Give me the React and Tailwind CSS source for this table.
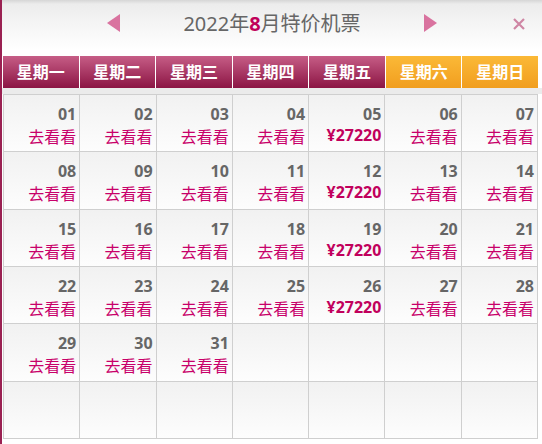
import React from "react";

const weekdays = ["星期一", "星期二", "星期三", "星期四", "星期五", "星期六", "星期日"];

function Triangle({ dir }) {
  return (
    <svg width="13" height="18" viewBox="0 0 13 18" className="block shrink-0">
      {dir === "left" ? (
        <polygon points="13,0 13,18 0,9" fill="#d9739f" />
      ) : (
        <polygon points="0,0 0,18 13,9" fill="#d9739f" />
      )}
    </svg>
  );
}

function DayCell({ day }) {
  if (!day) {
    return <div className="bg-[linear-gradient(to_bottom,#f1f1f1,#fdfdfd)]" />;
  }
  const isFriday = day % 7 === 5;
  const num = day < 10 ? "0" + day : "" + day;
  return (
    <div className="bg-[linear-gradient(to_bottom,#f1f1f1,#fdfdfd)] pt-[9px] pr-[3px] text-right">
      <p className="text-[16px] leading-[20px] font-bold text-[#666]">{num}</p>
      {isFriday ? (
        <p className="text-[16px] leading-[20px] mt-[1px] font-bold text-[#c1005c]">¥27220</p>
      ) : (
        <p className="text-[16px] leading-[20px] mt-[3px] text-[#c8006a]">去看看</p>
      )}
    </div>
  );
}

export default function App() {
  const cells = [];
  for (let i = 1; i <= 42; i++) cells.push(i <= 31 ? i : null);

  return (
    <div
      className="w-[542px] h-[444px] flex bg-white overflow-hidden"
      style={{ fontFamily: '"Noto Sans", "Noto Sans CJK SC", sans-serif' }}
    >
      {/* left edge strip */}
      <div className="w-[2px] bg-[#9a2152] shrink-0" />

      <div className="flex-1 flex flex-col">
        {/* title bar */}
        <div className="h-[56px] flex items-start pt-[14px] pl-[105px] bg-[linear-gradient(to_bottom,#d6d6d6_0px,#ececec_4px,#f4f4f4_22px,#ffffff_50px)]">
          <Triangle dir="left" />
          <p className="w-[304px] -mt-[1px] text-center text-[20px] leading-[22px] text-[#666]">
            2022年<span className="font-bold text-[#c0005a]">8</span>月特价机票
          </p>
          <Triangle dir="right" />
          <svg width="14" height="14" viewBox="0 0 14 14" className="ml-[75px] mt-[3px] shrink-0">
            <path d="M2 2 L12 12 M12 2 L2 12" stroke="#cf86a4" strokeWidth="2.2" />
          </svg>
        </div>

        {/* weekday header */}
        <div className="ml-[1px] w-[535px] h-[32px] flex gap-px">
          {weekdays.map((w, i) => (
            <div
              key={w}
              className={
                "flex-1 flex items-center justify-center text-white font-bold text-[16px] " +
                (i < 5
                  ? "bg-[linear-gradient(to_bottom,#c65d86,#8c1544)]"
                  : "bg-[linear-gradient(to_bottom,#fbb937,#f19e1f)]")
              }
            >
              {w}
            </div>
          ))}
        </div>

        <div className="h-[6px] bg-[#ebebeb]" />

        {/* calendar grid */}
        <div className="ml-[1px] w-[535px] h-[345px] grid grid-cols-7 grid-rows-6 gap-px p-px bg-[#cfcfcf]">
          {cells.map((d, i) => (
            <DayCell key={i} day={d} />
          ))}
        </div>
      </div>
    </div>
  );
}
